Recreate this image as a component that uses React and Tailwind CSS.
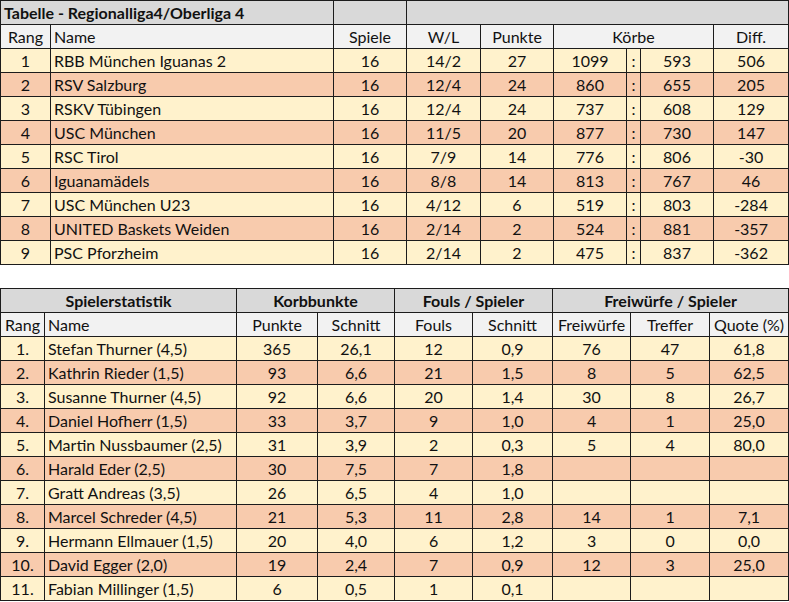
const teams = [
  [1, "RBB München Iguanas 2", 16, "14/2", 27, 1099, 593, 506],
  [2, "RSV Salzburg", 16, "12/4", 24, 860, 655, 205],
  [3, "RSKV Tübingen", 16, "12/4", 24, 737, 608, 129],
  [4, "USC München", 16, "11/5", 20, 877, 730, 147],
  [5, "RSC Tirol", 16, "7/9", 14, 776, 806, -30],
  [6, "Iguanamädels", 16, "8/8", 14, 813, 767, 46],
  [7, "USC München U23", 16, "4/12", 6, 519, 803, -284],
  [8, "UNITED Baskets Weiden", 16, "2/14", 2, 524, 881, -357],
  [9, "PSC Pforzheim", 16, "2/14", 2, 475, 837, -362],
];

const players = [
  ["1.", "Stefan Thurner (4,5)", "365", "26,1", "12", "0,9", "76", "47", "61,8"],
  ["2.", "Kathrin Rieder (1,5)", "93", "6,6", "21", "1,5", "8", "5", "62,5"],
  ["3.", "Susanne Thurner (4,5)", "92", "6,6", "20", "1,4", "30", "8", "26,7"],
  ["4.", "Daniel Hofherr (1,5)", "33", "3,7", "9", "1,0", "4", "1", "25,0"],
  ["5.", "Martin Nussbaumer (2,5)", "31", "3,9", "2", "0,3", "5", "4", "80,0"],
  ["6.", "Harald Eder (2,5)", "30", "7,5", "7", "1,8", "", "", ""],
  ["7.", "Gratt Andreas (3,5)", "26", "6,5", "4", "1,0", "", "", ""],
  ["8.", "Marcel Schreder (4,5)", "21", "5,3", "11", "2,8", "14", "1", "7,1"],
  ["9.", "Hermann Ellmauer (1,5)", "20", "4,0", "6", "1,2", "3", "0", "0,0"],
  ["10.", "David Egger (2,0)", "19", "2,4", "7", "0,9", "12", "3", "25,0"],
  ["11.", "Fabian Millinger (1,5)", "6", "0,5", "1", "0,1", "", "", ""],
];

// excel-style banding
const band = (i) => (i % 2 === 0 ? "bg-[#fff2cc]" : "bg-[#f8cbad]");
const td = "border border-[#1c1c1c] text-center leading-none p-0 pt-px";
const tdName = "border border-[#1c1c1c] text-left leading-none px-[3px] py-0 pt-px";

function LeagueTable() {
  return (
    <table className="table-fixed border-collapse w-[788px]">
      <colgroup>
        <col className="w-[50px]" />
        <col className="w-[283px]" />
        <col className="w-[73px]" />
        <col className="w-[74px]" />
        <col className="w-[73px]" />
        <col className="w-[73px]" />
        <col className="w-[14px]" />
        <col className="w-[73px]" />
        <col className="w-[75px]" />
      </colgroup>
      <tbody>
        <tr className="h-[24px] bg-[#d9d9d9]">
          <td colSpan={2} className={tdName + " font-bold"}>
            Tabelle - Regionalliga4/Oberliga 4
          </td>
          <td className={td}></td>
          <td colSpan={6} className={td}></td>
        </tr>
        <tr className="h-[24px] bg-[#f2f2f2]">
          <td className={td}>Rang</td>
          <td className={tdName}>Name</td>
          <td className={td}>Spiele</td>
          <td className={td}>W/L</td>
          <td className={td}>Punkte</td>
          <td colSpan={3} className={td}>Körbe</td>
          <td className={td}>Diff.</td>
        </tr>
        {teams.map((t, i) => (
          <tr key={t[0]} className={"h-[24px] " + band(i)}>
            <td className={td}>{t[0]}</td>
            <td className={tdName}>{t[1]}</td>
            <td className={td}>{t[2]}</td>
            <td className={td}>{t[3]}</td>
            <td className={td}>{t[4]}</td>
            <td className={td}>{t[5]}</td>
            <td className={td}>:</td>
            <td className={td}>{t[6]}</td>
            <td className={td}>{t[7]}</td>
          </tr>
        ))}
      </tbody>
    </table>
  );
}

function PlayerTable() {
  return (
    <table className="table-fixed border-collapse w-[788px]">
      <colgroup>
        <col className="w-[44px]" />
        <col className="w-[192px]" />
        <col className="w-[81px]" />
        <col className="w-[77px]" />
        <col className="w-[78px]" />
        <col className="w-[80px]" />
        <col className="w-[78px]" />
        <col className="w-[79px]" />
        <col className="w-[79px]" />
      </colgroup>
      <tbody>
        <tr className="h-[24px] bg-[#d9d9d9] font-bold">
          <td colSpan={2} className={td}>Spielerstatistik</td>
          <td colSpan={2} className={td}>Korbbunkte</td>
          <td colSpan={2} className={td}>Fouls / Spieler</td>
          <td colSpan={3} className={td}>Freiwürfe / Spieler</td>
        </tr>
        <tr className="h-[24px] bg-[#f2f2f2]">
          <td className={td}>Rang</td>
          <td className={tdName}>Name</td>
          <td className={td}>Punkte</td>
          <td className={td}>Schnitt</td>
          <td className={td}>Fouls</td>
          <td className={td}>Schnitt</td>
          <td className={td}>Freiwürfe</td>
          <td className={td}>Treffer</td>
          <td className={td}>Quote (%)</td>
        </tr>
        {players.map((p, i) => (
          <tr key={p[0]} className={"h-[24px] " + band(i)}>
            <td className={td}>{p[0]}</td>
            <td className={tdName}>{p[1]}</td>
            {p.slice(2).map((v, j) => (
              <td key={j} className={td}>{v}</td>
            ))}
          </tr>
        ))}
      </tbody>
    </table>
  );
}

export default function App() {
  return (
    <div className="w-[789px] h-[602px] bg-white overflow-hidden text-[16px] text-[#111] font-['Lato','Liberation_Sans',sans-serif]">
      <LeagueTable />
      <div className="h-[23px]" />
      <PlayerTable />
    </div>
  );
}
